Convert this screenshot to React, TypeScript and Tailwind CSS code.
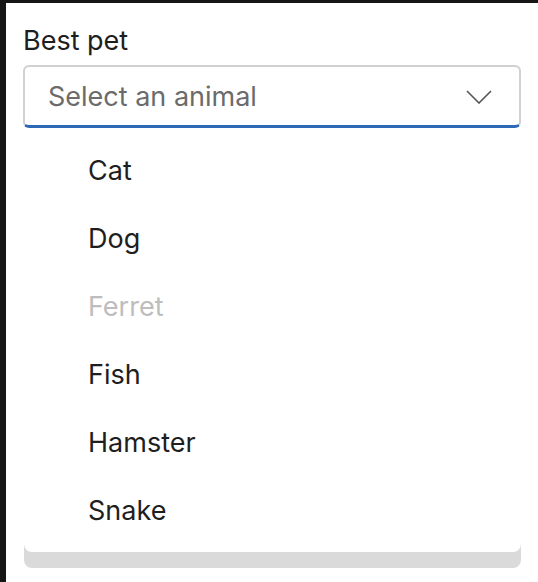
const animals = [
  { name: 'Cat', disabled: false },
  { name: 'Dog', disabled: false },
  { name: 'Ferret', disabled: true },
  { name: 'Fish', disabled: false },
  { name: 'Hamster', disabled: false },
  { name: 'Snake', disabled: false },
];

export default function App() {
  return (
    <div
      className="min-h-[582px] bg-white border-t-[3px] border-l-[6px] border-[#161616] pl-[17px] pr-[17px]"
      style={{ fontFamily: 'Inter, "Noto Sans", sans-serif' }}
    >
      <label className="block pt-[22px] text-[27px] leading-[32px] text-[#1e1e1e]">Best pet</label>

      <div className="mt-[8px] w-[498px]">
        {/* trigger */}
        <div className="flex h-[63px] items-center justify-between rounded-md border-2 border-b-[3px] border-[#d0d0d0] border-b-[#2e69b7] pl-[23px] pr-[27px]">
          <span className="pt-[3px] text-[27px] text-[#6b6b6b]">Select an animal</span>
          <svg width="26" height="14" viewBox="0 0 26 14" fill="none" className="mt-[2px]">
            <path d="M1 1 L13 13 L25 1" stroke="#555555" strokeWidth="1.6" />
          </svg>
        </div>

        {/* listbox */}
        <div className="ml-px rounded-b-lg bg-[#dadada] pb-[16px]">
          <ul className="rounded-b-lg bg-white pt-[9px] pb-[7px]">
            {animals.map(a => (
              <li
                key={a.name}
                className={`flex h-[68px] items-center pl-[64px] text-[27px] ${
                  a.disabled ? 'text-[#bdbdbd]' : 'text-[#1e1e1e]'
                }`}
              >
                {a.name}
              </li>
            ))}
          </ul>
        </div>
      </div>
    </div>
  );
}
